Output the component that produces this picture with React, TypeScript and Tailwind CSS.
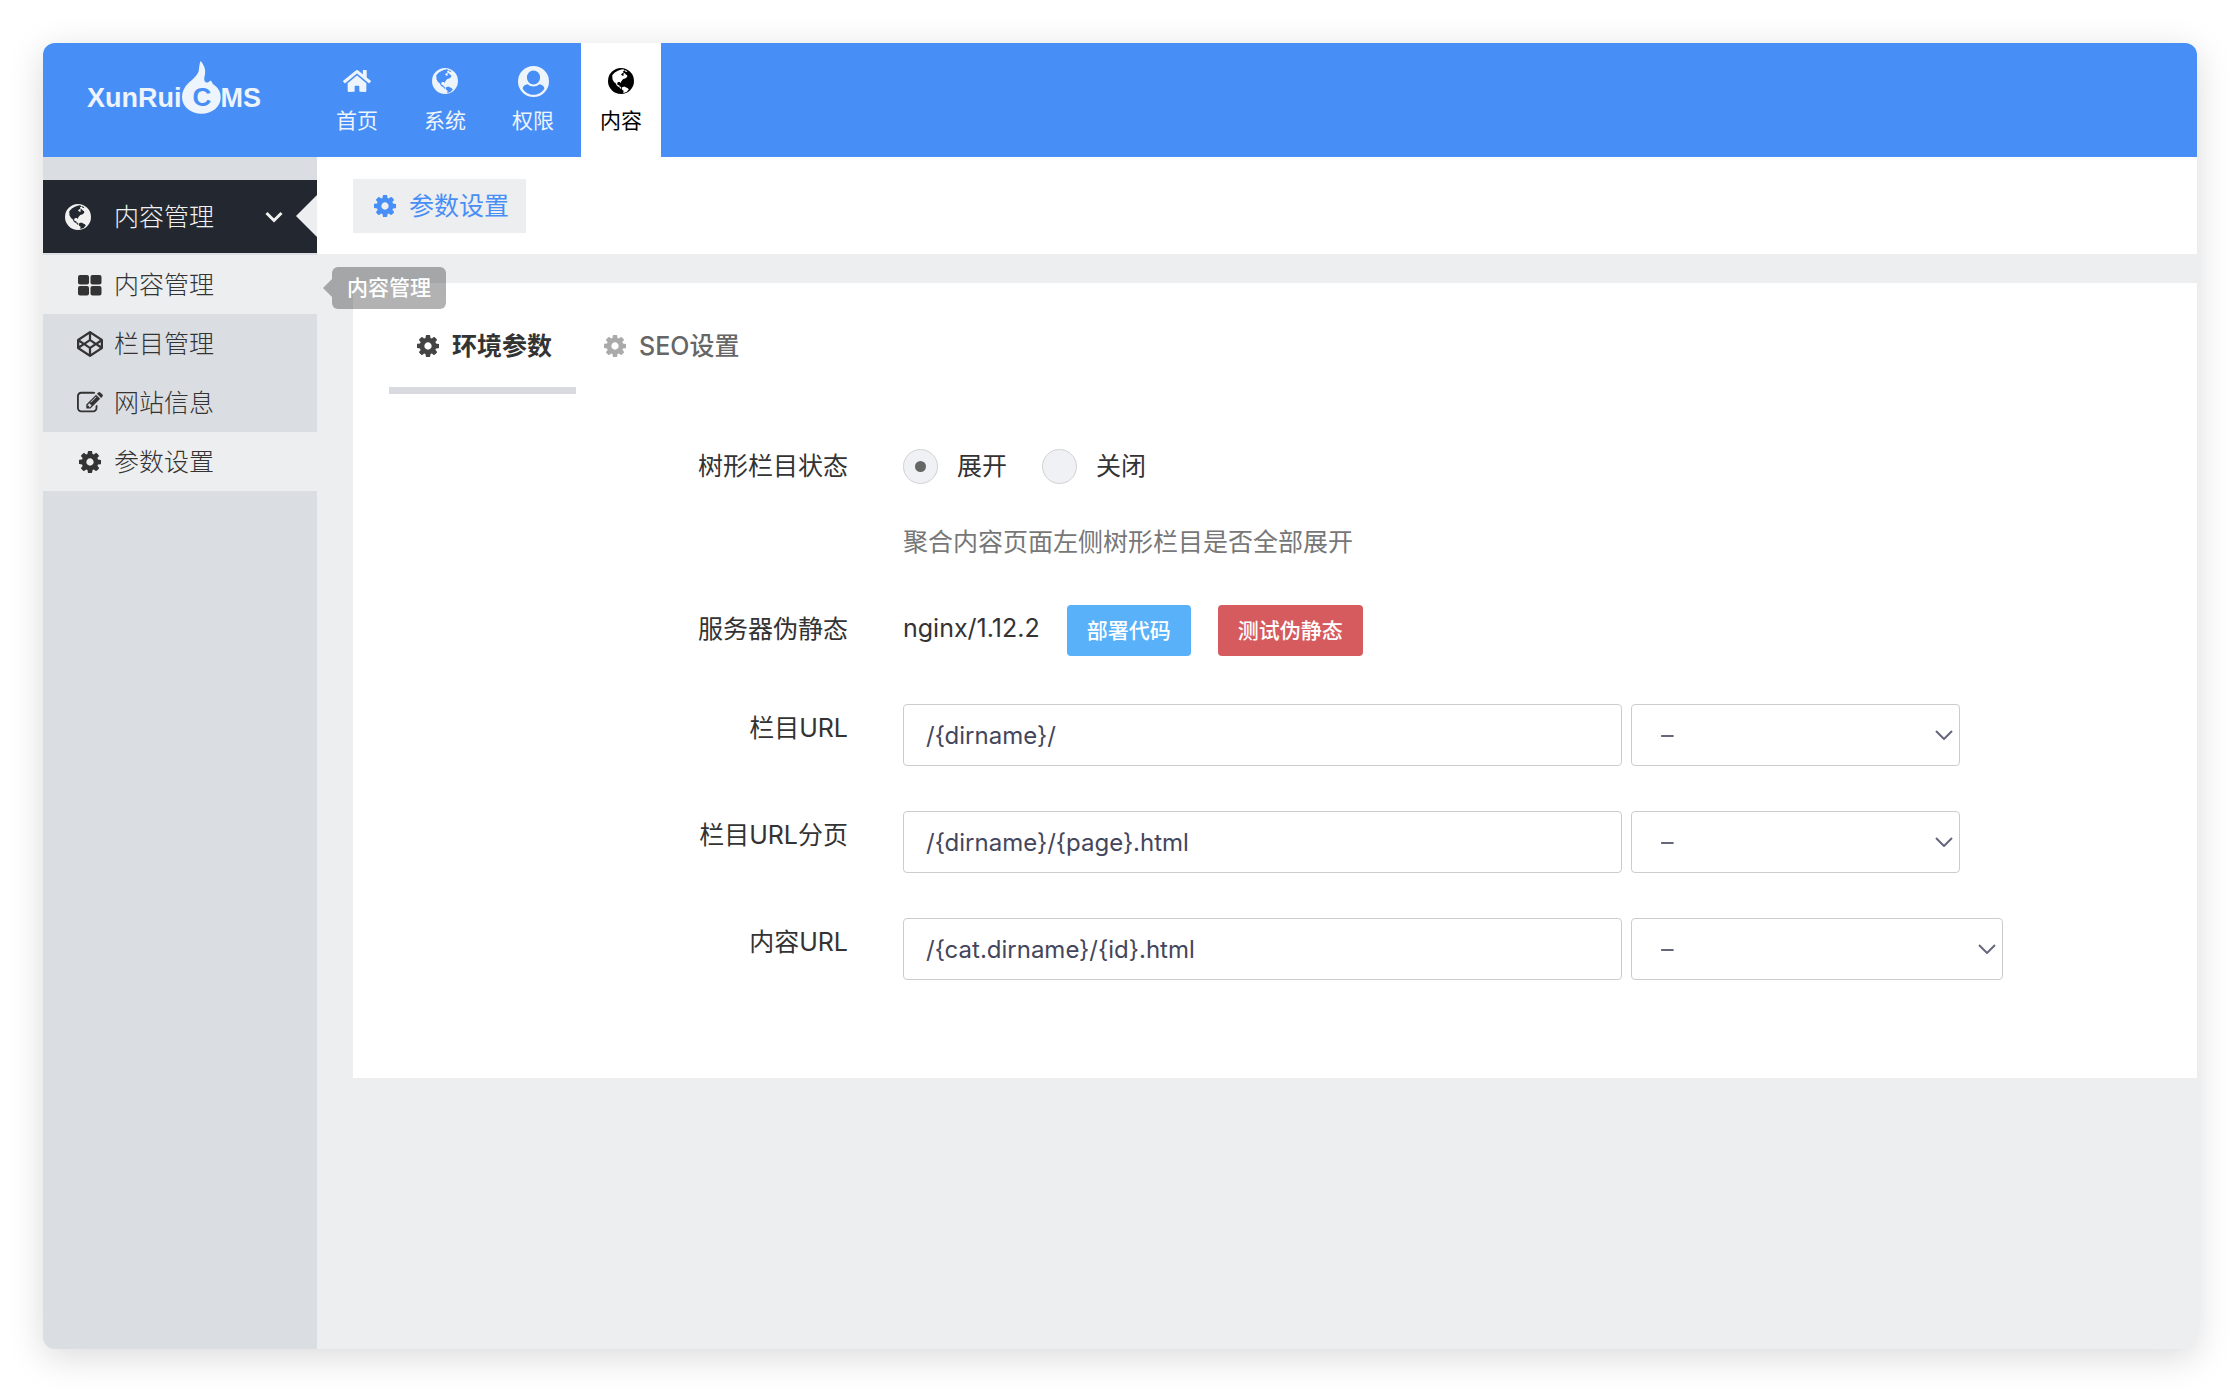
import { ReactNode, useState } from "react";
import { FaCodepen, FaHome } from "react-icons/fa";

type IconProps = { className?: string };

const CogIcon = ({ className }: IconProps) => (
  <svg viewBox="128 128 1536 1536" fill="currentColor" className={className}>
    <path d="M1152 896q0-106-75-181t-181-75-181 75-75 181 75 181 181 75 181-75 75-181zm512-109v222q0 12-8 23t-20 13l-185 28q-19 54-39 91 35 50 107 138 10 12 10 25t-9 23q-27 37-99 108t-94 71q-12 0-26-9l-138-108q-44 23-91 38-16 136-29 186-7 28-36 28h-222q-14 0-24.5-8.5t-11.5-21.5l-28-184q-49-16-90-37l-141 107q-10 9-25 9-14 0-25-11-126-114-165-168-7-10-7-23 0-12 8-23 15-21 51-66.5t54-70.5q-27-50-41-99l-183-27q-13-2-21-12.5t-8-23.5v-222q0-12 8-23t19-13l186-28q14-46 39-92-40-57-107-138-10-12-10-24 0-10 9-23 26-36 98.5-107.5t94.5-71.5q13 0 26 10l138 107q44-23 91-38 16-136 29-186 7-28 36-28h222q14 0 24.5 8.5t11.5 21.5l28 184q49 16 90 37l142-107q9-9 24-9 13 0 25 10 129 119 165 170 7 8 7 22 0 12-8 23-15 21-51 66.5t-54 70.5q26 50 41 98l183 28q13 2 21 12.5t8 23.5z" />
  </svg>
);

const GlobeIcon = ({ className }: IconProps) => (
  <svg
    viewBox="0 0 80 80"
    fill="currentColor"
    fillRule="evenodd"
    className={className}
  >
    <path d="M40 0a40 40 0 1 1 0 80a40 40 0 1 1 0-80zM13 22l1 13 5 9 4 2 5 9 7 4 3 5 3-2-3-5-4-1 1-4-5 1-2-6 3-4 6 0 2 4 2-6 6-7 6-2 6-4 0-6-5-3-3-4-4 3 2 5-4 1-5-3 3-4 5-3-2-4 5-2-4-4-9 1-9 4-8 5zM42 60l8-3 11 5 3 4-7 8-10 3 1-7-5-4zM49 8l7 4 4-1-6-4z" />
  </svg>
);

const UserIcon = ({ className }: IconProps) => (
  <svg
    viewBox="0 0 31 31"
    fill="currentColor"
    fillRule="evenodd"
    className={className}
  >
    <path d="M15.5 0a15.5 15.5 0 1 1 0 31a15.5 15.5 0 1 1 0-31zM15.5 4.5a6.6 7 0 1 0 0 14a6.6 7 0 1 0 0-14zM4.6 22.5C7 26.5 11 28.8 15.5 28.8S24 26.5 26.4 22.5C26 20 24 18.8 21.3 18.3C18 21.3 13 21.3 9.7 18.3C7 18.8 5 20 4.6 22.5z" />
  </svg>
);

const ThLargeIcon = ({ className }: IconProps) => (
  <svg viewBox="0 0 26 22" fill="currentColor" className={className}>
    <rect x="1" y="1" width="11" height="9.5" rx="2" />
    <rect x="13.5" y="1" width="11" height="9.5" rx="2" />
    <rect x="1" y="12" width="11" height="9.5" rx="2" />
    <rect x="13.5" y="12" width="11" height="9.5" rx="2" />
  </svg>
);

const EditIcon = ({ className }: IconProps) => (
  <svg viewBox="0 0 1792 1792" fill="currentColor" className={className}>
    <path d="M888 1184l116-116-152-152-116 116v56h96v96h56zm440-720q-16-16-33 1l-350 350q-17 17-1 33t33-1l350-350q17-17 1-33zm80 594v190q0 119-84.5 203.5t-203.5 84.5h-832q-119 0-203.5-84.5t-84.5-203.5v-832q0-119 84.5-203.5t203.5-84.5h832q63 0 117 25 15 7 18 23 3 17-9 29l-49 49q-14 14-32 8-23-6-45-6h-832q-66 0-113 47t-47 113v832q0 66 47 113t113 47h832q66 0 113-47t47-113v-126q0-13 9-22l64-64q15-15 35-7t20 29zm-96-738l288 288-672 672h-288v-288zm444 132l-92 92-288-288 92-92q28-28 68-28t68 28l152 152q28 28 28 68t-28 68z" />
  </svg>
);

const Logo = () => (
  <a
    href="#home"
    className="flex items-end pt-[18px] pl-[44px] w-[274px] h-[71px] shrink-0 font-['Liberation_Sans',sans-serif] text-[27px] leading-[32px] font-bold text-[#eef4fb]"
  >
    <span>XunRui</span>
    <svg viewBox="0 0 39 53" className="w-[39px] h-[53px] shrink-0">
      <path
        d="M18.7 0C22 4 24.5 9 22.500 15.500C22 18 22 20.500 24 21.500C26 22 27.500 20.500 28.500 19.500C30.500 21 30 22.500 31.500 23.500C36 26.500 38.700 30.500 38.700 36.500C38.700 46 30 52.700 19.500 52.700S0 46 0 36C0 31 2 26.500 6 22.500C11 18 16.500 14 17 8C17.300 5 17.500 2 18.700 0z"
        fill="currentColor"
      />
      <text
        x="20"
        y="45"
        textAnchor="middle"
        fill="#488ef7"
        className="text-[26px]"
      >
        C
      </text>
    </svg>
    <span>MS</span>
  </a>
);

const navItems = [
  { name: "首页", icon: <FaHome className="size-[28px]" /> },
  { name: "系统", icon: <GlobeIcon className="size-[26px]" /> },
  { name: "权限", icon: <UserIcon className="size-[31px]" /> },
  { name: "内容", icon: <GlobeIcon className="size-[26px]" /> },
];

const menuItems = [
  { name: "内容管理", icon: <ThLargeIcon className="w-[26px] h-[22px]" /> },
  { name: "栏目管理", icon: <FaCodepen className="size-[26px]" /> },
  { name: "网站信息", icon: <EditIcon className="size-[26px]" /> },
  { name: "参数设置", icon: <CogIcon className="size-[22px]" /> },
];

const urlFields = [
  { id: "list", name: "栏目URL", value: "/{dirname}/", width: "w-[329px]" },
  {
    id: "page",
    name: "栏目URL分页",
    value: "/{dirname}/{page}.html",
    width: "w-[329px]",
  },
  {
    id: "show",
    name: "内容URL",
    value: "/{cat.dirname}/{id}.html",
    width: "w-[372px]",
  },
];

const Row = ({
  label,
  htmlFor,
  children,
}: {
  label: string;
  htmlFor?: string;
  children: ReactNode;
}) => (
  <div className="grid grid-cols-[459px_1fr] gap-[55px]">
    {htmlFor ? (
      <label htmlFor={htmlFor} className="pt-[6px] text-right">
        {label}
      </label>
    ) : (
      <span className="pt-[6px] text-right">{label}</span>
    )}
    {children}
  </div>
);

const App = () => {
  const [tree, setTree] = useState("open");
  const [urls, setUrls] = useState<Record<string, string>>({
    list: urlFields[0].value,
    page: urlFields[1].value,
    show: urlFields[2].value,
  });

  return (
    <div className="flex min-h-screen bg-white p-[43px] font-['Inter','Noto_Sans_CJK_SC',sans-serif] text-[25px] leading-[36px] text-[#333]">
      <div className="flex flex-1 flex-col overflow-hidden rounded-xl bg-[#edeef0] shadow-[0_8px_36px_rgba(0,0,0,0.15)]">
        <header className="flex h-[114px] bg-[#488ef7]">
          <Logo />
          <nav className="flex gap-2">
            {navItems.map((item) => (
              <a
                key={item.name}
                href="#nav"
                className={
                  item.name === "内容"
                    ? "flex w-20 flex-col items-center bg-white pt-[20px] text-black"
                    : "flex w-20 flex-col items-center pt-[20px] text-[#eef4fb]"
                }
              >
                <span className="flex h-[36px] items-center">{item.icon}</span>
                <span className="mt-1 text-[21px]">{item.name}</span>
              </a>
            ))}
          </nav>
        </header>

        <div className="flex flex-1">
          <aside className="w-[274px] shrink-0 bg-[#dadde2] pt-[23px]">
            <button className="relative flex h-[73px] w-full items-center bg-[#232830] pl-[22px] font-light text-[#f1f1f1]">
              <GlobeIcon className="size-[26px]" />
              <span className="ml-[23px]">内容管理</span>
              <svg
                viewBox="0 0 18 12"
                fill="none"
                stroke="currentColor"
                strokeWidth="3"
                className="ml-[51px] h-[12px] w-[18px]"
              >
                <path d="M1.5 2l7.5 7.5L16.5 2" />
              </svg>
              <svg
                viewBox="0 0 21 42"
                fill="#edeef0"
                className="absolute top-[15px] right-0 h-[42px] w-[21px]"
              >
                <path d="M21 0v42L0 21z" />
              </svg>
            </button>
            <ul className="mt-[2px]">
              {menuItems.map((item) => (
                <li key={item.name} className="relative">
                  <a
                    href="#menu"
                    className={
                      item.name === "内容管理" || item.name === "参数设置"
                        ? "flex h-[59px] items-center gap-[11px] bg-[#edeef0] pl-[34px] font-light"
                        : "flex h-[59px] items-center gap-[11px] pl-[34px] font-light"
                    }
                  >
                    <span className="flex w-[26px] justify-center">
                      {item.icon}
                    </span>
                    {item.name}
                  </a>
                  {item.name === "内容管理" && (
                    <div
                      role="tooltip"
                      className="absolute top-3 left-full ml-[6px] flex items-center"
                    >
                      <svg
                        viewBox="0 0 9 18"
                        className="h-[18px] w-[9px] fill-black/30"
                      >
                        <path d="M9 0v18L0 9z" />
                      </svg>
                      <span className="flex h-[42px] items-center rounded-md bg-black/30 px-[15px] text-[21px] font-medium whitespace-nowrap text-white">
                        {item.name}
                      </span>
                    </div>
                  )}
                </li>
              ))}
            </ul>
          </aside>

          <main className="min-w-0 flex-1">
            <div className="flex h-[97px] items-start bg-white px-9 pt-[22px]">
              <a
                href="#config"
                className="flex h-[54px] items-center gap-[13px] bg-[#edeef0] pr-[17px] pl-[21px] text-[#488ef7]"
              >
                <CogIcon className="size-[22px]" />
                参数设置
              </a>
            </div>

            <section className="mt-[29px] ml-9 bg-white px-9 pb-[98px]">
              <div role="tablist" className="flex">
                <button
                  role="tab"
                  aria-selected
                  className="flex items-center gap-[13px] border-b-[7px] border-[#d9dadf] pt-[45px] pr-6 pb-[23px] pl-7 font-bold"
                >
                  <CogIcon className="size-[22px] text-[#444]" />
                  环境参数
                </button>
                <button
                  role="tab"
                  aria-selected={false}
                  className="flex items-center gap-[13px] border-b-[7px] border-transparent pt-[45px] pr-6 pb-[23px] pl-7 font-medium text-[#666]"
                >
                  <CogIcon className="size-[22px] text-[#aaa]" />
                  SEO设置
                </button>
              </div>

              <form className="pt-12">
                <Row label="树形栏目状态">
                  <div className="pt-[6px]">
                    <div className="flex gap-[35px]">
                      <label className="flex items-center gap-[19px]">
                        <input
                          type="radio"
                          name="tree"
                          checked={tree === "open"}
                          onChange={() => setTree("open")}
                          className="grid size-[35px] appearance-none place-items-center rounded-full border border-[#d2d2d4] bg-[#f0f1f5] checked:before:size-[11px] checked:before:rounded-full checked:before:bg-[#666]"
                        />
                        展开
                      </label>
                      <label className="flex items-center gap-[19px]">
                        <input
                          type="radio"
                          name="tree"
                          checked={tree === "close"}
                          onChange={() => setTree("close")}
                          className="grid size-[35px] appearance-none place-items-center rounded-full border border-[#d2d2d4] bg-[#f0f1f5] checked:before:size-[11px] checked:before:rounded-full checked:before:bg-[#666]"
                        />
                        关闭
                      </label>
                    </div>
                    <p className="mt-10 text-[#777]">
                      聚合内容页面左侧树形栏目是否全部展开
                    </p>
                  </div>
                </Row>

                <div className="mt-[45px]">
                  <Row label="服务器伪静态">
                    <div className="flex items-start gap-[27px]">
                      <span className="pt-[5px]">nginx/1.12.2</span>
                      <button
                        type="button"
                        className="h-[51px] rounded-sm bg-[#59b2f9] px-5 text-[21px] font-medium text-white"
                      >
                        部署代码
                      </button>
                      <button
                        type="button"
                        className="h-[51px] rounded-sm bg-[#d65b5e] px-5 text-[21px] font-medium text-white"
                      >
                        测试伪静态
                      </button>
                    </div>
                  </Row>
                </div>

                <div className="mt-12 flex flex-col gap-[45px]">
                  {urlFields.map((field) => (
                    <Row key={field.id} label={field.name} htmlFor={field.id}>
                      <div className="flex gap-[9px]">
                        <input
                          id={field.id}
                          type="text"
                          value={urls[field.id]}
                          onChange={(e) => {
                            setUrls({ ...urls, [field.id]: e.target.value });
                          }}
                          className="h-[62px] w-[719px] min-w-0 rounded-sm border border-[#ccc] px-[22px] text-[24px] text-[#44465c]"
                        />
                        <div className={`relative ${field.width}`}>
                          <select
                            aria-label={field.name + "规则"}
                            className="h-[62px] w-full appearance-none rounded-sm border border-[#ccc] bg-white px-[29px] text-[#66677c]"
                          >
                            <option>–</option>
                          </select>
                          <svg
                            viewBox="0 0 18 10"
                            fill="none"
                            stroke="#66677c"
                            strokeWidth="2"
                            className="pointer-events-none absolute top-[26px] right-[7px] h-[10px] w-[18px]"
                          >
                            <path d="M1 1l8 8 8-8" />
                          </svg>
                        </div>
                      </div>
                    </Row>
                  ))}
                </div>
              </form>
            </section>
          </main>
        </div>
      </div>
    </div>
  );
};

export default App;
